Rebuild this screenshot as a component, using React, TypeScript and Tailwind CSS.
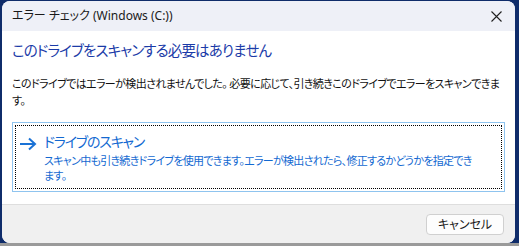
export default function App() {
  const font = "[font-family:'Noto_Sans','Noto_Sans_CJK_JP',sans-serif] [font-feature-settings:'palt']";

  return (
    <div className={`w-[519px] h-[246px] overflow-hidden bg-[#0f2c6a] pt-px pl-[2px] ${font}`}>
      <div className="w-[513px] h-[242px] bg-white rounded-lg overflow-hidden flex flex-col">
        {/* title bar */}
        <div className="h-[30px] shrink-0 bg-[#eef0f7] flex items-center justify-between pl-[10px] pr-[9px]">
          <span className="text-[12px] leading-none text-[#1a1a1a]">エラー チェック (Windows (C:))</span>
          <svg width="11" height="11" viewBox="0 0 11 11" className="mr-[4px]">
            <path d="M0.5 0.5 L10.5 10.5 M10.5 0.5 L0.5 10.5" stroke="#202020" strokeWidth="1.1" />
          </svg>
        </div>

        {/* content */}
        <div className="flex-1 px-[10px] pt-[9px]">
          <div className="text-[14.5px] tracking-[-0.85px] leading-[20px] text-[#1b3ba8] whitespace-nowrap">
            このドライブをスキャンする必要はありません
          </div>
          <div className="mt-[15px] text-[11px] tracking-[-0.6px] leading-[17px] text-[#111] whitespace-nowrap">
            <div>このドライブではエラーが検出されませんでした。 必要に応じて、引き続きこのドライブでエラーをスキャンできま</div>
            <div>す。</div>
          </div>

          <div className="mt-[13px] h-[70px] border border-[#8fc4ef] p-[2px]">
            <div className="h-full border border-dotted border-black flex">
              <svg width="18" height="14" viewBox="0 0 18 14" className="ml-[3px] mt-[11px] shrink-0">
                <path d="M1 7 H16 M10 1.5 L16 7 L10 12.5" stroke="#1a72d6" strokeWidth="2" fill="none" />
              </svg>
              <div className="ml-[7px] pt-[6px] whitespace-nowrap text-[#1369d1]">
                <div className="text-[14px] tracking-[-1.2px] leading-[20px]">ドライブのスキャン</div>
                <div className="text-[11px] tracking-[-0.7px] leading-[15px] mt-[1px]">
                  <div>スキャン中も引き続きドライブを使用できます。エラーが検出されたら、修正するかどうかを指定でき</div>
                  <div>ます。</div>
                </div>
              </div>
            </div>
          </div>
        </div>

        {/* footer */}
        <div className="h-[39px] shrink-0 bg-[#f0f0f0] border-t border-[#dedede] flex justify-end items-start pt-[9px] pr-[11px]">
          <button className="w-[78px] h-[21px] rounded-[4px] border border-[#d0d0d0] bg-[#fdfdfd] text-[12px] leading-none text-[#1a1a1a]">
            キャンセル
          </button>
        </div>
      </div>
      <div className="h-[3px] bg-[#9a9a9a] -ml-[2px]" />
    </div>
  );
}
